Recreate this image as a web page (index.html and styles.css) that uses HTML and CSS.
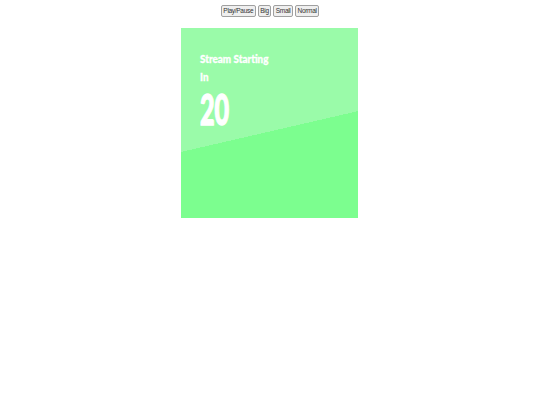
FILE: index.html
```html
<!DOCTYPE html>
<html>
<head>
<meta charset="utf-8">
<link rel="stylesheet" href="styles.css">
</head>
<body>
<div class="controls">
  <button class="btn">Play/Pause</button>
  <button class="btn">Big</button>
  <button class="btn">Small</button>
  <button class="btn">Normal</button>
</div>
<div class="card">
  <div class="title">Stream Starting</div>
  <div class="title">In</div>
  <div class="count">20</div>
</div>
</body>
</html>
```
FILE: styles.css
```css
html, body {
  margin: 0;
  padding: 0;
  background: #ffffff;
}
.controls {
  display: flex;
  justify-content: center;
  gap: 2px;
  padding-top: 5px;
  height: 12px;
}
.btn {
  height: 12px;
  margin: 0;
  padding: 0 1.5px;
  font-family: "Liberation Sans", Arial, sans-serif;
  font-size: 6.5px;
  letter-spacing: -0.3px;
  line-height: 10px;
  color: #333;
  background: #efefef;
  border: 1px solid #a0a0a0;
  border-radius: 2px;
}
.card {
  width: 177px;
  height: 190px;
  margin: 11px 0 0 calc(50% - 89px);
  background: linear-gradient(167deg, #9afba9 120.8px, #7cfe8f 120.8px);
  box-sizing: border-box;
  padding: 22px 0 0 19px;
  font-family: Lato, "DejaVu Sans", sans-serif;
  font-weight: 900;
  color: #ffffff;
}
.title {
  font-size: 12px;
  line-height: 18px;
  transform: scaleX(0.82);
  transform-origin: left top;
  -webkit-text-stroke: 0.3px #ffffff;
}
.count {
  font-size: 42px;
  line-height: 46px;
  transform: scaleX(0.6);
  transform-origin: left top;
  -webkit-text-stroke: 1.4px #ffffff;
}
```
